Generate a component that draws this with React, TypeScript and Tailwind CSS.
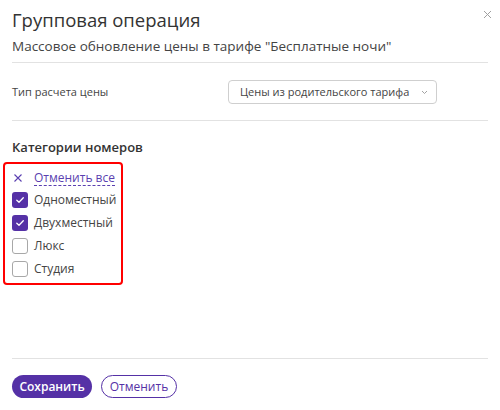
import React from 'react';

const categories = [
  { name: 'Одноместный', checked: true },
  { name: 'Двухместный', checked: true },
  { name: 'Люкс', checked: false },
  { name: 'Студия', checked: false },
];

const Check = ({ checked }: { checked: boolean }) =>
  checked ? (
    <span className="flex h-[16px] w-[16px] items-center justify-center rounded-[3px] bg-[#5531a6]">
      <svg width="10" height="10" viewBox="0 0 10 10" fill="none">
        <path d="M1.8 5.2 4 7.3 8.3 2.8" stroke="#fff" strokeWidth="1.3" strokeLinecap="round" strokeLinejoin="round" />
      </svg>
    </span>
  ) : (
    <span className="h-[16px] w-[16px] rounded-[3px] border border-[#a8a8a8] bg-white" />
  );

const App = () => {
  return (
    <div className="relative flex h-[410px] w-[500px] flex-col bg-white px-3 pt-2 pb-3 text-[#333] [font-family:'Open_Sans',sans-serif]">
      {/* close */}
      <button className="absolute top-[10px] right-[8px] text-[#a0a0a0]">
        <svg width="9" height="9" viewBox="0 0 9 9" fill="none">
          <path d="M1 1l7 7M8 1 1 8" stroke="currentColor" strokeWidth="1" />
        </svg>
      </button>

      <h1 className="text-[18.5px] leading-6 font-normal text-[#333]">Групповая операция</h1>
      <p className="mt-1 text-[13.5px] leading-5 text-[#444]">Массовое обновление цены в тарифе "Бесплатные ночи"</p>
      <div className="mt-[6px] h-px bg-[#e2e2e2]" />

      <div className="mt-[17px] flex items-center">
        <span className="w-[216px] text-[11px] text-[#444]">Тип расчета цены</span>
        <div className="flex h-[24px] w-[209px] items-center justify-between rounded-[4px] border border-[#cfcfcf] pr-[8px] pl-[11px] text-[11px] whitespace-nowrap text-[#444]">
          <span>Цены из родительского тарифа</span>
          <svg width="7" height="5" viewBox="0 0 7 5" fill="none">
            <path d="M1 1l2.5 2.5L6 1" stroke="#999" strokeWidth="0.9" />
          </svg>
        </div>
      </div>
      <div className="mt-4 h-px bg-[#e2e2e2]" />

      <h2 className="mt-[17px] text-[13px] leading-[18px] font-semibold text-[#333]">Категории номеров</h2>

      <div className="mt-[6px] -ml-[9px] w-[120px] rounded-[4px] border-2 border-[#ff0000] pt-[3px] pb-[3px] pl-[7px]">
        <div className="flex h-[21px] items-center gap-[12px] pl-[2px]">
          <svg width="8" height="8" viewBox="0 0 8 8" fill="none">
            <path d="M0.5 0.5l7 7M7.5 0.5l-7 7" stroke="#5a3fb0" strokeWidth="1.1" />
          </svg>
          <span className="border-b border-dashed border-[#5a3fb0] text-[12px] leading-[15px] text-[#5a3fb0]">
            Отменить все
          </span>
        </div>
        {categories.map((c) => (
          <div key={c.name} className="flex h-[23px] items-center gap-[6px] text-[12px] text-[#444]">
            <Check checked={c.checked} />
            <span>{c.name}</span>
          </div>
        ))}
      </div>

      <div className="flex-1" />
      <div className="h-px bg-[#e2e2e2]" />
      <div className="mt-4 flex gap-[9px]">
        <button className="h-[23px] w-[80px] rounded-full bg-[#5531a6] text-[12px] font-semibold text-white">
          Сохранить
        </button>
        <button className="h-[23px] w-[76px] rounded-full border border-[#5531a6] bg-white text-[12px] text-[#5531a6]">
          Отменить
        </button>
      </div>
    </div>
  );
};

export default App;
